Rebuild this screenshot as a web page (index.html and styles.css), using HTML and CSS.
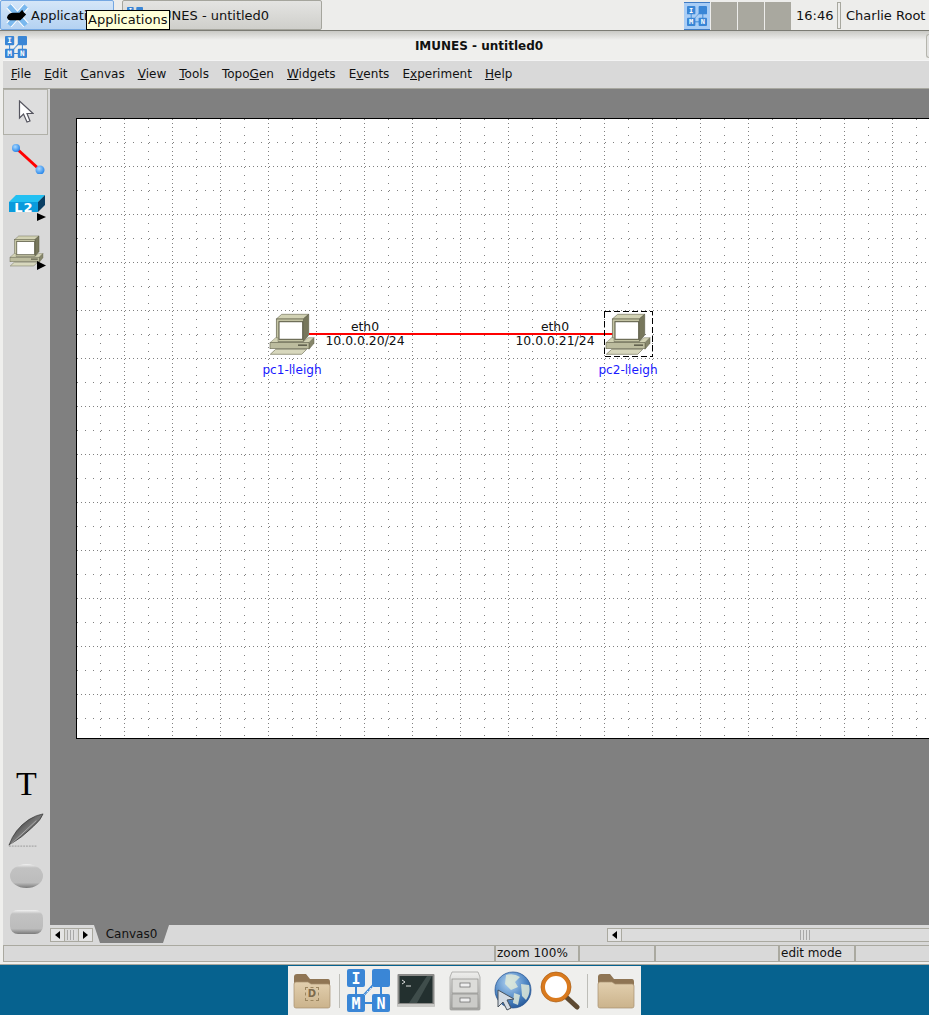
FILE: index.html
```html
<!DOCTYPE html>
<html lang="en">
<head>
<meta charset="utf-8">
<title>IMUNES - untitled0</title>
<link rel="stylesheet" href="styles.css">
</head>
<body>
<svg class="defs" aria-hidden="true">
  <defs>
    <linearGradient id="gFolder" x1="0" y1="0" x2="0" y2="1"><stop offset="0" stop-color="#e2cfae"/><stop offset="1" stop-color="#cbb38c"/></linearGradient>
    <linearGradient id="gSilver" x1="0" y1="0" x2="0" y2="1"><stop offset="0" stop-color="#eeeeec"/><stop offset="1" stop-color="#a9a9a6"/></linearGradient>
    <radialGradient id="gGlobe" cx=".4" cy=".3" r=".8"><stop offset="0" stop-color="#b5d5f2"/><stop offset=".6" stop-color="#4a83c2"/><stop offset="1" stop-color="#1f4f8f"/></radialGradient>
    <radialGradient id="gBall" cx=".4" cy=".35" r=".7"><stop offset="0" stop-color="#a8d8ff"/><stop offset="1" stop-color="#1e80e8"/></radialGradient>
    <linearGradient id="gFeather" x1="0" y1="0" x2="1" y2="1"><stop offset="0" stop-color="#111"/><stop offset=".5" stop-color="#777"/><stop offset="1" stop-color="#111"/></linearGradient>
    <pattern id="dotVS" width="48" height="8" patternUnits="userSpaceOnUse"><rect x="23" y="0" width="1" height="1" fill="#808080"/></pattern>
    <pattern id="dotVD" width="48" height="4" patternUnits="userSpaceOnUse"><rect x="47" y="0" width="1" height="1" fill="#808080"/></pattern>
    <pattern id="dotHS" width="8" height="48" patternUnits="userSpaceOnUse"><rect x="0" y="23" width="1" height="1" fill="#808080"/></pattern>
    <pattern id="dotHD" width="4" height="48" patternUnits="userSpaceOnUse"><rect x="0" y="47" width="1" height="1" fill="#808080"/></pattern>
    <symbol id="logo" viewBox="0 0 43 43">
      <path d="M9 14V32M34 14V32M16 34H27M15 28L28 14" stroke="#3a86d6" stroke-width="2" fill="none"/>
      <path d="M14 29L29 14" stroke="#e8f0f8" stroke-width="1" stroke-dasharray="2 2" fill="none"/>
      <rect x="0" y="0" width="18" height="18" rx="2" fill="#3a86d6"/>
      <rect x="25" y="0" width="18" height="18" rx="2" fill="#3a86d6"/>
      <rect x="0" y="25" width="18" height="18" rx="2" fill="#3a86d6"/>
      <rect x="25" y="25" width="18" height="18" rx="2" fill="#3a86d6"/>
      <text x="9" y="14.500" class="logo-letter">I</text>
      <text x="9" y="39.500" class="logo-letter">M</text>
      <text x="34" y="39.500" class="logo-letter">N</text>
    </symbol>
    <symbol id="pc" viewBox="0 0 46 44">
      <path d="M7.300 6L12.700 1.300H39.700L34.300 6Z" fill="#d2d2b4" stroke="#66664f" stroke-width=".6"/>
      <path d="M34.300 6L39.700 1.300V22L34.300 28.700Z" fill="#77775c" stroke="#55553f" stroke-width=".6"/>
      <rect x="7.300" y="6" width="27" height="22.700" fill="#c4c4a4" stroke="#66664f" stroke-width=".7"/>
      <rect x="10" y="8.700" width="23.700" height="17.600" fill="#fff" stroke="#55553f" stroke-width="1"/>
      <path d="M1 29.700L6.700 24.700H9V28.700H34.300L39 24.700H45L40 29.700Z" fill="#d2d2b4" stroke="#77775f" stroke-width=".5"/>
      <path d="M40 29.700L45 24.700V30.300L40 36.300Z" fill="#86866b" stroke="#66664f" stroke-width=".5"/>
      <rect x="1" y="29.700" width="39" height="6" fill="#bcbc9e" stroke="#66664f" stroke-width=".6"/>
      <rect x="29" y="31.500" width="9" height="1.300" fill="#4d4d3c"/>
      <path d="M6.700 36.300H37.700L32.700 41.300H1.300Z" fill="#d8d8bd" stroke="#77775f" stroke-width=".7"/>
    </symbol>
    <symbol id="folder" viewBox="0 0 38 36">
      <path d="M1 4Q1 1 4 1H13L17 6H35Q37 6 37 9V15H1Z" fill="#8f7554"/>
      <path d="M1 11Q1 9 3 9H15L18 11H35Q37 11 37 13V33Q37 35 35 35H3Q1 35 1 33Z" fill="url(#gFolder)" stroke="#a89070" stroke-width=".7"/>
    </symbol>
  </defs>
</svg>

<header class="panel">
  <div class="app-button">
    <svg class="xfce" viewBox="0 0 24 24">
      <path d="M3 2L21 22M21 2L3 22" stroke="#fff" stroke-width="7"/>
      <path d="M3 2L21 22M21 2L3 22" stroke="#7ab8ee" stroke-width="5"/>
      <path d="M1 14Q2 9 8 9L14 9L17 6L18 8L21 11L18 14L15 17H5Q2 17 1 14Z" fill="#000"/>
    </svg>
    <span class="app-label">Applications</span>
  </div>
  <div class="task-button">
    <svg class="task-icon"><use href="#logo"/></svg>
    <span>IMUNES - untitled0</span>
  </div>
  <div class="tooltip">Applications</div>
  <div class="panel-right">
    <div class="pager">
      <div class="page page-active"><svg class="page-logo"><use href="#logo"/></svg></div>
      <div class="page"></div>
      <div class="page"></div>
      <div class="page"></div>
    </div>
    <span class="clock">16:46</span>
    <span class="handle"></span>
    <span class="user">Charlie Root</span>
  </div>
</header>

<div class="window">
  <div class="titlebar">
    <svg class="title-icon"><use href="#logo"/></svg>
    <div class="title">IMUNES - untitled0</div>
    <div class="title-btn"></div>
  </div>
  <nav class="menubar">
    <span class="menu"><u>F</u>ile</span>
    <span class="menu"><u>E</u>dit</span>
    <span class="menu"><u>C</u>anvas</span>
    <span class="menu"><u>V</u>iew</span>
    <span class="menu"><u>T</u>ools</span>
    <span class="menu">Topo<u>G</u>en</span>
    <span class="menu"><u>W</u>idgets</span>
    <span class="menu">E<u>v</u>ents</span>
    <span class="menu">E<u>x</u>periment</span>
    <span class="menu"><u>H</u>elp</span>
  </nav>
  <div class="main">
    <aside class="toolbar">
      <div class="tool-group">
        <div class="tool tool-selected">
          <svg class="ic-pointer" viewBox="0 0 16 24"><path d="M1.500 1V18L5.500 14L9 22L12 21L9 13.500H15Z" fill="#fff" stroke="#55555f" stroke-width="1.200"/></svg>
        </div>
        <div class="tool">
          <svg class="ic-link" viewBox="0 0 34 30"><path d="M5 4L29 26" stroke="#f00" stroke-width="3"/><circle cx="5" cy="4" r="4" fill="url(#gBall)"/><circle cx="29" cy="26" r="4.500" fill="url(#gBall)"/></svg>
        </div>
        <div class="tool">
          <svg class="ic-l2" viewBox="0 0 40 30">
            <path d="M1 8L8 1H37L30 8Z" fill="#22c0f2"/>
            <path d="M30 8L37 1V11L30 18Z" fill="#0a3f63"/>
            <rect x="1" y="8" width="29" height="10" fill="#0a9bdc"/>
            <text x="16" y="17.500" class="l2-text">L2</text>
            <path d="M29 19V27L38 23Z" fill="#000"/>
          </svg>
        </div>
        <div class="tool">
          <svg class="ic-pc" viewBox="0 0 40 40">
            <use href="#pc" x="1" width="35" height="33"/>
            <path d="M29 26V35L38 30.500Z" fill="#000"/>
          </svg>
        </div>
      </div>
      <div class="tool-group">
        <div class="tool tool-low"><span class="tool-t">T</span></div>
        <div class="tool tool-low">
          <svg class="ic-pen" viewBox="0 0 38 36"><path d="M1 34Q7 17 22 7Q30 2 37 1Q35 7 27 14Q15 26 1 34Z" fill="url(#gFeather)" stroke="#222" stroke-width=".6"/><path d="M2 34L30 8" stroke="#e4e4e4" stroke-width=".5"/><path d="M1 35H30" stroke="#999" stroke-width="1" stroke-dasharray="2 1"/></svg>
        </div>
        <div class="tool tool-low"><div class="shape shape-oval"></div></div>
        <div class="tool tool-low"><div class="shape shape-round"></div></div>
      </div>
    </aside>
    <div class="workspace">
      <div class="canvas-wrap">
        <div class="canvas">
          <svg class="grid" aria-hidden="true">
            <rect width="100%" height="100%" fill="url(#dotVS)"/>
            <rect width="100%" height="100%" fill="url(#dotVD)"/>
            <rect width="100%" height="100%" fill="url(#dotHS)"/>
            <rect width="100%" height="100%" fill="url(#dotHD)"/>
          </svg>
          <div class="link"></div>
          <svg class="node node-1"><use href="#pc"/></svg>
          <svg class="selection" aria-hidden="true"><rect x=".5" y=".5" width="48" height="45" fill="none" stroke="#000" stroke-dasharray="6 3"/></svg>
          <svg class="node node-2"><use href="#pc"/></svg>
          <span class="label if-name if-1">eth0</span>
          <span class="label if-addr if-1">10.0.0.20/24</span>
          <span class="label if-name if-2">eth0</span>
          <span class="label if-addr if-2">10.0.0.21/24</span>
          <span class="label node-name name-1">pc1-lleigh</span>
          <span class="label node-name name-2">pc2-lleigh</span>
        </div>
      </div>
      <div class="tabrow">
        <div class="tab-scroll">
          <span class="sb-btn"><i class="arrow-l"></i></span>
          <span class="sb-grip"></span>
          <span class="sb-btn"><i class="arrow-r"></i></span>
        </div>
        <div class="tab">Canvas0</div>
        <div class="hscroll">
          <span class="sb-btn"><i class="arrow-l"></i></span>
          <div class="trough"><span class="sb-grip sb-grip-long"></span></div>
        </div>
      </div>
    </div>
  </div>
  <footer class="statusbar">
    <div class="cell cell-1"></div>
    <div class="cell cell-2">zoom 100%</div>
    <div class="cell cell-3"></div>
    <div class="cell cell-4"></div>
    <div class="cell cell-5">edit mode</div>
    <div class="cell cell-6"></div>
  </footer>
</div>

<div class="desktop">
  <div class="dock">
    <div class="folder-wrap">
      <svg class="dock-folder"><use href="#folder"/></svg>
      <span class="folder-label">D</span>
    </div>
    <span class="dock-sep"></span>
    <svg class="dock-logo"><use href="#logo"/></svg>
    <svg class="dock-term" viewBox="0 0 38 36">
      <rect x="0.500" y="1" width="37" height="33" rx="1" fill="#8a8a88"/>
      <rect x="2.500" y="3" width="33" height="27" fill="#23302f"/>
      <path d="M12 30L30 3H35L20 30Z" fill="#3f4d4b"/>
      <path d="M5 7L8 9L5 11M9 13H14" stroke="#ddd" stroke-width="1" fill="none"/>
      <rect x="0.500" y="31" width="37" height="3" fill="#c9c9c6"/>
    </svg>
    <svg class="dock-cab" viewBox="0 0 32 40">
      <path d="M3 1H29L31 6V38Q31 39 30 39H2Q1 39 1 38V6Z" fill="url(#gSilver)" stroke="#9a9a97" stroke-width=".7"/>
      <rect x="3" y="8" width="26" height="14" fill="#dcdcd9" stroke="#8b8b88" stroke-width=".7"/>
      <rect x="3" y="23" width="26" height="14" fill="#cbcbc8" stroke="#8b8b88" stroke-width=".7"/>
      <rect x="11" y="12" width="10" height="4" fill="#eee" stroke="#666" stroke-width=".7"/>
      <rect x="11" y="27" width="10" height="4" fill="#eee" stroke="#666" stroke-width=".7"/>
    </svg>
    <svg class="dock-globe" viewBox="0 0 40 40">
      <circle cx="21" cy="19" r="18" fill="url(#gGlobe)" stroke="#1f4f8f" stroke-width=".7"/>
      <path d="M14 4Q22 2 28 6L23 11L26 16L19 19L13 13ZM29 13L37 14Q39 22 34 29L30 25ZM22 22L28 24L26 34L21 32Z" fill="#dfe9d8" opacity=".85"/>
      <path d="M6 19V36L11 31L15 39L19 37L15 29L22 28Z" fill="#d4dbe3" stroke="#48525c" stroke-width="1"/>
    </svg>
    <svg class="dock-mag" viewBox="0 0 40 40">
      <path d="M24 24L37 36" stroke="#5e4a32" stroke-width="5" stroke-linecap="round"/>
      <circle cx="16" cy="16" r="13" fill="#fff" stroke="#d97a1e" stroke-width="4"/>
      <circle cx="16" cy="16" r="15" fill="none" stroke="#a85c12" stroke-width=".7"/>
    </svg>
    <span class="dock-sep dock-sep-2"></span>
    <svg class="dock-folder"><use href="#folder"/></svg>
  </div>
</div>
</body>
</html>
```
FILE: styles.css
```css
* { box-sizing: border-box; }
html, body { margin: 0; padding: 0; }
body {
  width: 929px;
  height: 1015px;
  overflow: hidden;
  display: flex;
  flex-direction: column;
  background: #06628f;
  font-family: "DejaVu Sans", sans-serif;
  font-size: 12px;
  color: #111;
  position: relative;
}
.defs { width: 0; height: 0; position: absolute; }
.logo-letter { font: bold 15px "DejaVu Sans Mono", monospace; fill: #fff; text-anchor: middle; }
.l2-text { font: bold 13px "DejaVu Sans", sans-serif; fill: #fff; text-anchor: middle; letter-spacing: 1px; }

/* top panel */
.panel {
  height: 31px;
  flex: none;
  display: flex;
  align-items: flex-start;
  background: #ededeb;
  border-bottom: 1px solid #7c7c74;
  position: relative;
}
.app-button {
  width: 114px;
  height: 30px;
  flex: none;
  display: flex;
  align-items: center;
  padding-left: 5px;
  gap: 2px;
  background: linear-gradient(#d5e6f8, #b4d2f2);
  border: 1px solid #74a7e2;
  border-radius: 2px;
  font-size: 13px;
  overflow: hidden;
  white-space: nowrap;
}
.xfce { width: 23px; height: 23px; flex: none; }
.task-button {
  width: 200px;
  height: 30px;
  flex: none;
  margin-left: 8px;
  display: flex;
  align-items: center;
  gap: 4px;
  padding-left: 4px;
  background: linear-gradient(#e4e4e2, #cfcfcb);
  border: 1px solid #a5a59d;
  border-radius: 2px;
  font-size: 13px;
  white-space: nowrap;
}
.task-icon { width: 16px; height: 16px; flex: none; }
.tooltip {
  position: absolute;
  left: 86px;
  top: 10px;
  width: 84px;
  height: 20px;
  background: #ffffd8;
  border: 1px solid #000;
  font-size: 13px;
  line-height: 18px;
  padding-left: 1px;
  white-space: nowrap;
}
.panel-right { margin-left: auto; display: flex; align-items: center; height: 30px; }
.pager { display: flex; gap: 1px; height: 29px; margin-right: 5px; }
.page { width: 26px; height: 28px; margin-top: 1px; background: #a9a89f; }
.page-active {
  background: #a9cdf5;
  border-top: 1px solid #3f7bc4;
  border-bottom: 1px solid #3f7bc4;
  display: flex;
  align-items: center;
  justify-content: center;
}
.page-logo { width: 20px; height: 20px; }
.clock { font-size: 13px; width: 41px; }
.handle { width: 4px; height: 27px; border: 1px solid #a8a89f; margin-right: 5px; }
.user { font-size: 13px; width: 83px; white-space: nowrap; }

/* window */
.window {
  width: 929px;
  height: 934px;
  flex: none;
  display: flex;
  flex-direction: column;
  background: #efefed;
  padding: 0 0 2px 3px;
  border-bottom: 1px solid #a8a89f;
}
.titlebar {
  height: 29px;
  flex: none;
  margin-left: -3px;
  padding-left: 5px;
  display: flex;
  align-items: center;
  position: relative;
  background: linear-gradient(#c9c9c5 0, #efefed 9px);
}
.title-icon { width: 22px; height: 22px; margin-top: 3px; }
.title {
  position: absolute;
  left: 0;
  right: 0;
  top: 9px;
  padding-left: 29px;
  text-align: center;
  font-weight: bold;
  font-size: 12px;
  line-height: 13px;
}
.title-btn {
  margin-left: auto;
  width: 3px;
  height: 24px;
  background: #e2e2e0;
  border: 1px solid #b5b5ad;
  border-right: 0;
  border-radius: 5px 0 0 5px;
}
.menubar {
  height: 29px;
  flex: none;
  display: flex;
  align-items: center;
  gap: 13px;
  padding: 0 0 2px 8px;
  background: #d9d9d9;
  border-top: 1px solid #f4f4f4;
  border-bottom: 1px solid #a8a8a0;
  letter-spacing: .02px;
}
.menu { white-space: nowrap; }
.main { flex: 1; min-height: 0; display: flex; background: #d9d9d9; }
.toolbar {
  width: 47px;
  flex: none;
  display: flex;
  flex-direction: column;
  justify-content: space-between;
}
.tool {
  width: 45px;
  height: 48px;
  display: flex;
  align-items: center;
  justify-content: center;
}
.tool-selected {
  height: 46px;
  border: 1px solid #b0b0a8;
  background: #dedede;
}
.tool-low { height: 46px; }
.ic-pointer { width: 16px; height: 24px; }
.ic-link { width: 34px; height: 30px; margin-left: 4px; }
.ic-l2 { width: 40px; height: 30px; margin-left: 4px; margin-top: 4px; }
.ic-pc { width: 40px; height: 40px; margin-left: 4px; }
.tool-t { font: 34px/1 "Liberation Serif", serif; color: #000; margin-left: 2px; }
.ic-pen { width: 36px; height: 36px; margin-left: 1px; }
.shape {
  width: 33px;
  height: 24px;
  margin-left: 2px;
  background: linear-gradient(#f2f2f2, #c2c2c2 16%, #bcbcbc 78%, #7a7a7a);
}
.shape-oval { border-radius: 50%; }
.shape-round { border-radius: 8px; }

.workspace { flex: 1; min-width: 0; display: flex; flex-direction: column; overflow: hidden; }
.canvas-wrap {
  flex: 1;
  min-height: 0;
  background: #808080;
  padding: 29px 0 0 26px;
}
.canvas {
  width: 100%;
  height: 621px;
  background: #fff;
  border: 1px solid #000;
  border-right: 0;
  position: relative;
}
.grid { position: absolute; left: 0; top: 0; width: 100%; height: 100%; shape-rendering: crispEdges; }
.link { position: absolute; left: 232px; top: 214px; width: 304px; height: 2px; background: #f00; }
.node { position: absolute; top: 194px; width: 46px; height: 44px; }
.node-1 { left: 192px; }
.node-2 { left: 528px; }
.selection {
  position: absolute;
  left: 527px;
  top: 192px;
  width: 49px;
  height: 46px;
  shape-rendering: crispEdges;
}
.label { position: absolute; transform: translateX(-50%); font-size: 12.400px; line-height: 14px; white-space: nowrap; color: #111; }
.if-name { top: 201px; }
.if-addr { top: 215px; }
.if-1 { left: 288px; }
.if-2 { left: 478px; }
.node-name { top: 244px; font-size: 12.100px; color: #1a1aff; }
.name-1 { left: 215px; }
.name-2 { left: 551px; }

.tabrow { height: 20px; flex: none; display: flex; align-items: flex-start; background: #d9d9d9; }
.tab-scroll {
  width: 43px;
  height: 14px;
  flex: none;
  margin-top: 3px;
  display: flex;
  border: 1px solid #aaa9a0;
}
.sb-btn {
  width: 14px;
  flex: none;
  display: flex;
  align-items: center;
  justify-content: center;
  background: #e4e4e4;
  border-right: 1px solid #aaa9a0;
}
.tab-scroll .sb-btn:last-child { border-right: 0; border-left: 1px solid #aaa9a0; }
.sb-grip {
  flex: 1;
  background: repeating-linear-gradient(90deg, #a8a8a8 0 1px, #dedede 1px 3px);
  margin: 1px 2px;
}
.arrow-l, .arrow-r { width: 0; height: 0; border-top: 4px solid transparent; border-bottom: 4px solid transparent; }
.arrow-l { border-right: 5px solid #000; }
.arrow-r { border-left: 5px solid #000; }
.tab {
  width: 75px;
  height: 18px;
  flex: none;
  margin-left: 1px;
  background: #808080;
  clip-path: polygon(0 0, 100% 0, 92% 100%, 8% 100%);
  font-size: 12px;
  line-height: 18px;
  text-align: center;
  color: #111;
}
.hscroll {
  margin-left: 438px;
  margin-top: 3px;
  flex: 1;
  height: 14px;
  display: flex;
  border: 1px solid #aaa9a0;
  border-right: 0;
}
.trough { flex: 1; display: flex; justify-content: flex-start; padding-left: 178px; background: #dcdcdc; }
.sb-grip-long { flex: none; width: 10px; margin: 1px 0; }

.statusbar { height: 17px; flex: none; display: flex; background: #d9d9d9; }
.cell {
  height: 17px;
  border: 1px solid #aaa9a0;
  font-size: 12px;
  line-height: 15px;
  padding-left: 1px;
  white-space: nowrap;
  flex: none;
}
.cell-1 { width: 492px; }
.cell-2 { width: 84px; }
.cell-3 { width: 76px; }
.cell-4 { width: 124px; }
.cell-5 { width: 76px; }
.cell-6 { flex: 1; border-right: 0; }

/* dock */
.desktop { flex: 1; min-height: 0; display: flex; justify-content: center; align-items: flex-end; }
.dock {
  width: 353px;
  height: 49px;
  display: flex;
  align-items: center;
  background: #efefed;
  padding-left: 5px;
}
.folder-wrap { position: relative; width: 38px; height: 36px; flex: none; }
.folder-label {
  position: absolute;
  left: 12px;
  top: 14px;
  width: 14px;
  height: 14px;
  border: 1px dashed #9c8660;
  color: #7d6a4c;
  font-size: 10px;
  font-weight: bold;
  line-height: 12px;
  text-align: center;
}
.dock-folder { width: 38px; height: 36px; flex: none; display: block; }
.dock-sep { width: 1px; height: 34px; background: #bdbdb8; margin: 0 7px 0 8px; flex: none; }
.dock-logo { width: 43px; height: 43px; flex: none; }
.dock-term { width: 38px; height: 36px; margin-left: 7px; flex: none; }
.dock-cab { width: 32px; height: 40px; margin-left: 14px; flex: none; }
.dock-globe { width: 40px; height: 40px; margin-left: 11px; flex: none; }
.dock-mag { width: 40px; height: 40px; margin-left: 8px; flex: none; }
.dock-sep-2 { margin: 0 9px 0 7px; }
```
